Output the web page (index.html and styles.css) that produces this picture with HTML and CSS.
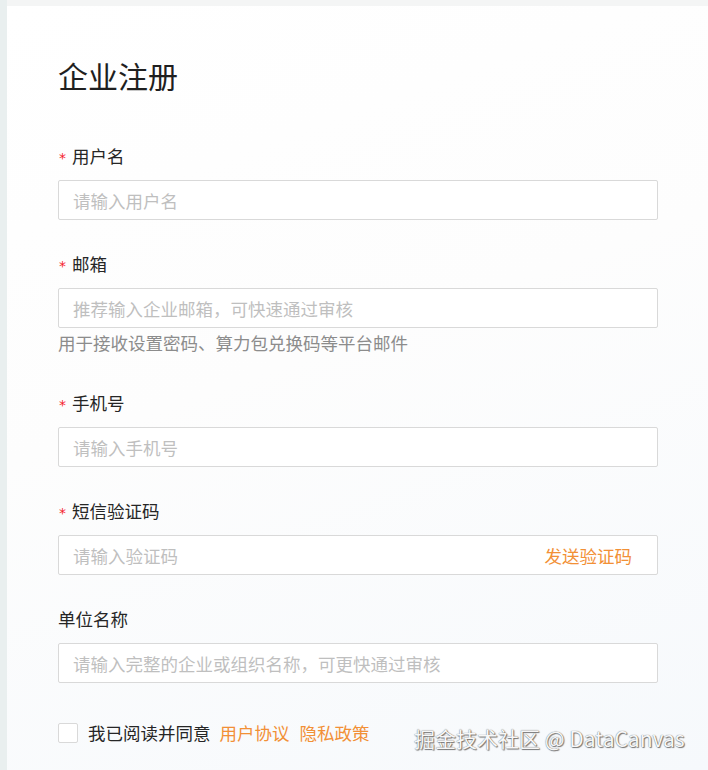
FILE: index.html
```html
<!DOCTYPE html>
<html lang="zh-CN">
<head>
<meta charset="utf-8">
<link rel="stylesheet" href="styles.css">
</head>
<body>
<div class="page">
  <div class="card">
    <h1 class="title">企业注册</h1>
    <div class="item">
      <div class="label"><span class="req">*</span>用户名</div>
      <div class="input"><span class="ph">请输入用户名</span></div>
    </div>
    <div class="item item-help">
      <div class="label"><span class="req">*</span>邮箱</div>
      <div class="input"><span class="ph">推荐输入企业邮箱，可快速通过审核</span></div>
      <div class="help">用于接收设置密码、算力包兑换码等平台邮件</div>
    </div>
    <div class="item">
      <div class="label"><span class="req">*</span>手机号</div>
      <div class="input"><span class="ph">请输入手机号</span></div>
    </div>
    <div class="item">
      <div class="label"><span class="req">*</span>短信验证码</div>
      <div class="input"><span class="ph">请输入验证码</span><span class="send">发送验证码</span></div>
    </div>
    <div class="item">
      <div class="label">单位名称</div>
      <div class="input"><span class="ph">请输入完整的企业或组织名称，可更快通过审核</span></div>
    </div>
    <div class="agree">
      <span class="box"></span>
      <span class="agree-text">我已阅读并同意</span>
      <span class="link">用户协议</span>
      <span class="link">隐私政策</span>
    </div>
    <div class="watermark">掘金技术社区 @ DataCanvas</div>
  </div>
</div>
</body>
</html>
```

FILE: styles.css
```css
* { box-sizing: border-box; }
html, body { margin: 0; padding: 0; }
body {
  width: 708px;
  height: 770px;
  overflow: hidden;
  background: #f4f5f5;
  font-family: "Noto Sans CJK SC", "Noto Sans", sans-serif;
}
.page {
  padding: 6px 0 0 7px;
  height: 770px;
  background: linear-gradient(to right, #e9efef 0, #e9efef 7px, #f4f5f5 7px);
}
.card {
  position: relative;
  height: 764px;
  background: linear-gradient(160deg, #ffffff 0%, #fdfdfd 45%, #f6f9fc 100%);
  padding: 49px 0 0 51px;
}
.title {
  margin: 0 0 49px 0;
  font-size: 30px;
  line-height: 40px;
  height: 40px;
  font-weight: 400;
  color: #1f1f1f;
}
.item {
  width: 600px;
  margin-bottom: 32px;
}
.item-help { margin-bottom: 36px; }
.label {
  display: flex;
  align-items: center;
  height: 24px;
  font-size: 17.5px;
  line-height: 24px;
  color: #262626;
  margin-bottom: 12px;
}
.req {
  color: #f5222d;
  margin-right: 6px;
  margin-left: 1px;
  font-family: "DejaVu Sans", sans-serif;
  font-size: 14px;
  line-height: 24px;
  height: 24px;
  position: relative;
  top: 2px;
}
.input {
  height: 40px;
  border: 1px solid #d9d9d9;
  border-radius: 2px;
  background: #fff;
  display: flex;
  align-items: center;
  justify-content: space-between;
  padding: 0 25px 0 14px;
  font-size: 17.5px;
}
.ph { color: #bfbfbf; }
.send { color: #f29036; }
.help {
  font-size: 17.5px;
  line-height: 24px;
  height: 24px;
  margin-top: 3px;
  color: #8c8c8c;
}
.agree {
  display: flex;
  align-items: center;
  height: 24px;
  margin-top: 38px;
  font-size: 17.5px;
  line-height: 24px;
}
.box {
  width: 20px;
  height: 20px;
  border: 1px solid #d9d9d9;
  border-radius: 2px;
  background: #fff;
  margin-right: 10px;
}
.agree-text { color: #262626; margin-right: 9px; }
.link { color: #f29036; margin-right: 10px; }
.watermark {
  position: absolute;
  left: 407px;
  top: 719px;
  font-size: 21px;
  line-height: 26px;
  color: #f7f7f7;
  text-shadow: 0 0 1px #555, 1px 1px 1px #777;
  white-space: nowrap;
}
```
